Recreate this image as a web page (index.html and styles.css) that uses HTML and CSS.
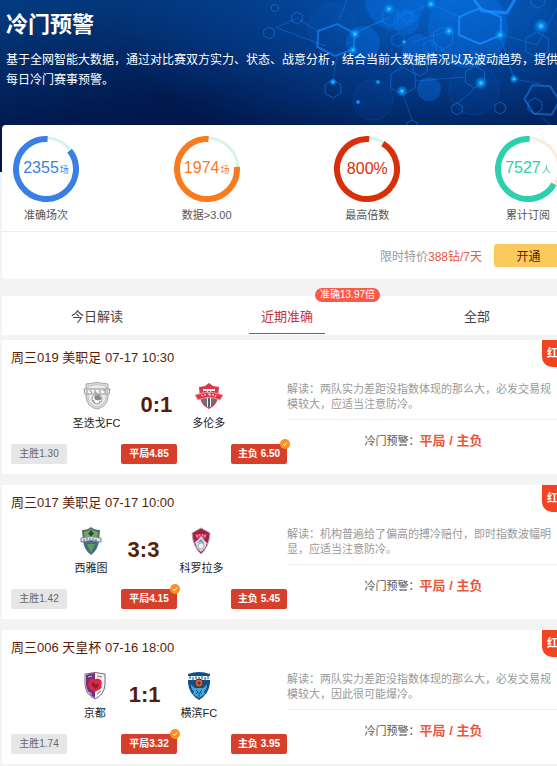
FILE: index.html
```html
<!DOCTYPE html>
<html lang="zh-CN">
<head>
  <meta charset="UTF-8" />
  <meta name="viewport" content="width=device-width, initial-scale=1" />
  <title>冷门预警</title>
  <link rel="stylesheet" href="styles.css">
</head>
<body>
  <header class="banner">
    <svg class="banner-bg" viewBox="0 0 574 172" preserveAspectRatio="xMaxYMin slice" aria-hidden="true">
      <defs>
        <path id="hex" d="M0-10 8.7-5V5L0 10-8.7 5V-5Z" vector-effect="non-scaling-stroke" />
        <radialGradient id="glow">
          <stop offset="0" stop-color="#5ce0ff" />
          <stop offset=".35" stop-color="#0aa0ff" stop-opacity=".8" />
          <stop offset="1" stop-color="#0080ff" stop-opacity="0" />
        </radialGradient>
      </defs>
      <g fill="#0a78f0" fill-opacity=".35">
        <circle cx="363" cy="43" r="17" />
        <circle cx="468" cy="28" r="40" />
        <circle cx="406" cy="22" r="13" />
        <circle cx="418" cy="50" r="16" />
        <circle cx="395" cy="0" r="30" />
        <circle cx="429" cy="89" r="12" />
      </g>
      <g fill="#0a60d0" fill-opacity=".1" stroke="#1a70d8" stroke-opacity=".2">
        <circle cx="332" cy="28" r="24" />
        <circle cx="373" cy="100" r="20" />
        <circle cx="474" cy="90" r="25" />
        <circle cx="530" cy="35" r="28" />
      </g>
      <g fill="none" stroke="#1f8cff" stroke-opacity=".35">
        <path d="M275 28 297 18 319 32M339 20 347 0M355 32 384 20M337 55 333 80M398 17 431 4 462 18M354 34 390 17M412 42 449 31M441 50 475 65M503 35 537 45 557 8M475 88 457 104M416 81 464 77M500 36 514 79 541 84M403 94 412 120M326 46 277 28M541 117 557 130" />
      </g>
      <g fill="none" stroke="#1a80f0" stroke-opacity=".55">
        <use href="#hex" transform="translate(403 81) scale(1.4)" />
        <use href="#hex" transform="translate(333 89) scale(.9)" />
        <use href="#hex" transform="translate(475 77) scale(1.1)" />
        <use href="#hex" transform="translate(537 45) scale(1.3)" />
        <use href="#hex" transform="translate(443 38) scale(1.1)" />
        <use href="#hex" transform="translate(390 17) scale(.9)" />
        <use href="#hex" transform="translate(407 17) scale(.6)" />
        <use href="#hex" transform="translate(297 18) scale(.6)" />
        <use href="#hex" transform="translate(269 33) scale(.6)" />
        <use href="#hex" transform="translate(275 8) scale(.4)" />
        <use href="#hex" transform="translate(457 109) scale(.6)" />
        <use href="#hex" transform="translate(500 108) scale(.6)" />
        <use href="#hex" transform="translate(535 106) scale(.8)" />
        <use href="#hex" transform="translate(430 47) scale(.7)" />
        <use href="#hex" transform="translate(398 40) scale(.7)" />
        <use href="#hex" transform="translate(420 68) scale(.8)" />
        <use href="#hex" transform="translate(538 0) scale(.8)" />
        <use href="#hex" transform="translate(412 126) scale(.6)" />
      </g>
      <g fill="none" stroke="#1a8cff" stroke-opacity=".8" stroke-width="2">
        <use href="#hex" transform="translate(336 40) rotate(4) scale(2.1 1.6)" stroke-opacity=".6" />
        <use href="#hex" transform="translate(480 26) scale(2.4 1.8)" />
        <use href="#hex" transform="translate(493 -8) rotate(30) scale(2.6 2.2)" stroke-width="3" />
        <use href="#hex" transform="translate(542 100) rotate(30) scale(1.8 1.6)" stroke-opacity=".5" />
      </g>
      <g fill="url(#glow)">
        <circle cx="389" cy="9" r="6" />
        <circle cx="431" cy="4" r="6" />
        <circle cx="449" cy="31" r="6" />
        <circle cx="355" cy="34" r="6" />
        <circle cx="353" cy="50" r="5" />
        <circle cx="500" cy="35" r="6" />
        <circle cx="541" cy="26" r="8" />
        <circle cx="333" cy="82" r="4" />
        <circle cx="402" cy="91" r="6" />
        <circle cx="481" cy="83" r="7" />
        <circle cx="514" cy="79" r="5" />
        <circle cx="358" cy="102" r="3" />
        <circle cx="378" cy="82" r="3" />
        <circle cx="404" cy="42" r="3" />
      </g>
    </svg>
    <div class="banner-text">
      <h1>冷门预警</h1>
      <p>基于全网智能大数据，通过对比赛双方实力、状态、战意分析，结合当前大数据情况以及波动趋势，提供每日冷门赛事预警。</p>
    </div>
  </header>

  <main>
    <section class="summary">
      <ul class="stats">
        <li class="stat blue">
          <div class="ring">
            <svg viewBox="0 0 66 66" aria-hidden="true">
              <circle class="track" cx="33" cy="33" r="31" />
              <circle class="arc" cx="33" cy="33" r="30" pathLength="360" stroke-dasharray="311 360" transform="rotate(-38 33 33)" />
            </svg>
            <strong>2355<small>场</small></strong>
          </div>
          <span class="label">准确场次</span>
        </li>
        <li class="stat orange">
          <div class="ring">
            <svg viewBox="0 0 66 66" aria-hidden="true">
              <circle class="track" cx="33" cy="33" r="31" />
              <circle class="arc" cx="33" cy="33" r="30" pathLength="360" stroke-dasharray="277 360" transform="rotate(-4 33 33)" />
            </svg>
            <strong>1974<small>场</small></strong>
          </div>
          <span class="label">数据&gt;3.00</span>
        </li>
        <li class="stat red">
          <div class="ring">
            <svg viewBox="0 0 66 66" aria-hidden="true">
              <circle class="track" cx="33" cy="33" r="31" />
              <circle class="arc" cx="33" cy="33" r="30" pathLength="360" stroke-dasharray="332 360" transform="rotate(-58 33 33)" />
            </svg>
            <strong>800%</strong>
          </div>
          <span class="label">最高倍数</span>
        </li>
        <li class="stat teal">
          <div class="ring">
            <svg viewBox="0 0 66 66" aria-hidden="true">
              <circle class="track" cx="33" cy="33" r="31" />
              <circle class="arc" cx="33" cy="33" r="30" pathLength="360" stroke-dasharray="243 360" transform="rotate(30 33 33)" />
            </svg>
            <strong>7527<small>人</small></strong>
          </div>
          <span class="label">累计订阅</span>
        </li>
      </ul>
      <div class="offer">
        <span>限时特价<em>388钻/7天</em></span>
        <button type="button" class="open-btn">开通</button>
      </div>
    </section>

    <nav class="tabs">
      <button type="button">今日解读</button>
      <button type="button" class="active">近期准确<span class="tip">准确13.97倍</span></button>
      <button type="button">全部</button>
    </nav>

    <article class="match">
      <h2>周三019 美职足 07-17 10:30</h2>
      <span class="ribbon">红</span>
      <div class="match-body">
        <div class="left">
          <div class="teams">
            <div class="team">
              <svg viewBox="0 0 28 28" aria-hidden="true">
                <path d="M3 2Q14-1 25 2V15Q24 25 14 27 4 25 3 15Z" fill="#dcdcdc" stroke="#a8a8a8" />
                <path d="M5 4Q14 1 23 4V15Q22 23 14 25 6 23 5 15Z" fill="#ececec" stroke="#c4c4c4" />
                <path d="M1 7H27L26 12H2Z" fill="#f5f5f5" stroke="#909090" />
                <path d="M4 8v3M7 8l2 3M12 8v3h2M17 8v3M20 8h2v3M24 8v3" stroke="#888" fill="none" />
                <circle cx="14" cy="17" r="5" fill="#fafafa" stroke="#999" />
                <path d="M12 14l4-1 2 4-3 1-3-1zM10 18l2 3M17 19l-1 2" fill="#888" stroke="#888" />
              </svg>
              <span>圣迭戈FC</span>
            </div>
            <b class="score">0:1</b>
            <div class="team">
              <svg viewBox="0 0 28 28" aria-hidden="true">
                <path d="M14 1 18 4 24 5 23 16Q21 24 14 27 7 24 5 16L4 5 10 4Z" fill="#d63a4e" />
                <path d="M7 16H21Q20 22 14 25 8 22 7 16Z" fill="#66727f" />
                <path d="M8 7H20V9H16V25H12V9H8Z" fill="#f2f2f4" />
                <path d="M13 9h2v16h-2z" fill="#536170" />
                <path d="M0 13Q14 8 28 13L25 18Q14 13 3 18Z" fill="#d9354b" stroke="#f0a0aa" />
                <path d="M6 13l2 1M10 12v2M13 12h2v2M18 12v2M21 13l-1 2" stroke="#fff" fill="none" />
              </svg>
              <span>多伦多</span>
            </div>
          </div>
          <div class="odds">
            <span>主胜1.30</span>
            <span class="hit">平局4.85</span>
            <span class="hit">主负 6.50<svg class="check" viewBox="0 0 10 10" aria-hidden="true"><circle cx="5" cy="5" r="5" /><path d="M3 5 4.500 6.500 7 3.500" /></svg></span>
          </div>
        </div>
        <div class="right">
          <p>解读：两队实力差距没指数体现的那么大，必发交易规模较大，应适当注意防冷。</p>
          <div class="warn">冷门预警：<b>平局 / 主负</b></div>
        </div>
      </div>
    </article>

    <article class="match">
      <h2>周三017 美职足 07-17 10:00</h2>
      <span class="ribbon">红</span>
      <div class="match-body">
        <div class="left">
          <div class="teams">
            <div class="team">
              <svg viewBox="0 0 28 28" aria-hidden="true">
                <path d="M5 3Q11 3 14 0 17 3 23 3L22 14Q21 23 14 28 7 23 6 14Z" fill="#50697c" />
                <path d="M7 5Q12 4 14 2 16 4 21 5L20 13H8Z" fill="#72ab4c" />
                <path d="M14 3l3 4-2 1v5h-2V8l-2-1z" fill="#24434e" />
                <path d="M8 16H20Q19 22 14 26 9 22 8 16Z" fill="#2c70a0" />
                <path d="M10 17h8l-4 9z" fill="#679b4f" />
                <path d="M4 11Q14 8 24 11V15Q14 12 4 15Z" fill="#dce3e6" stroke="#718895" />
                <path d="M7 12v2M10 11v2M13 11v2M16 11v2M19 12v2" stroke="#5b707e" />
              </svg>
              <span>西雅图</span>
            </div>
            <b class="score">3:3</b>
            <div class="team">
              <svg viewBox="0 0 28 28" aria-hidden="true">
                <path d="M14 1 23 6Q22 20 14 27 6 20 5 6Z" fill="#a51f45" stroke="#b8a2ac" />
                <path d="M8 7H20L18 12H10Z" fill="#cf4564" />
                <path d="M8 15 12 12 14 9 17 13 20 16 18 21 14 25 10 21Z" fill="#dbe2ee" />
                <path d="M10 16l4-4 4 5-4-2z" fill="#748fb6" />
                <circle cx="14" cy="19" r="3" fill="#f6f6fa" stroke="#9ea9c4" />
                <path d="M9 9h2M12 8h1M15 8h1M17 9h2" stroke="#f4c2cc" />
              </svg>
              <span>科罗拉多</span>
            </div>
          </div>
          <div class="odds">
            <span>主胜1.42</span>
            <span class="hit">平局4.15<svg class="check" viewBox="0 0 10 10" aria-hidden="true"><circle cx="5" cy="5" r="5" /><path d="M3 5 4.500 6.500 7 3.500" /></svg></span>
            <span class="hit">主负 5.45</span>
          </div>
        </div>
        <div class="right">
          <p>解读：机构普遍给了偏高的搏冷赔付，即时指数波幅明显，应适当注意防冷。</p>
          <div class="warn">冷门预警：<b>平局 / 主负</b></div>
        </div>
      </div>
    </article>

    <article class="match">
      <h2>周三006 天皇杯 07-16 18:00</h2>
      <span class="ribbon">红</span>
      <div class="match-body">
        <div class="left">
          <div class="teams">
            <div class="team">
              <svg viewBox="0 0 28 28" aria-hidden="true">
                <path d="M4 2Q14-1 24 2V13Q23 23 14 27 5 23 4 13Z" fill="#f4f0f4" stroke="#7c6680" />
                <path d="M5 3Q10 1 14 1V26Q6 22 5 13Z" fill="#71317f" />
                <path d="M16 4l5 1M17 18l4-3M16 22l4-3" stroke="#777" />
                <path d="M8 9Q10 5 13 8 16 5 20 8 22 12 19 17L14 20 9 17Q6 13 8 9Z" fill="#e1263f" />
                <path d="M10 12l3-2 1 3 3-2 1 3-4 3z" fill="#8f1f3b" />
                <path d="M7 5l4-1M7 20l4 2" stroke="#d9b7df" />
              </svg>
              <span>京都</span>
            </div>
            <b class="score">1:1</b>
            <div class="team">
              <svg viewBox="0 0 28 28" aria-hidden="true">
                <path d="M3 2Q14-2 25 2V11Q24 22 14 28 4 22 3 11Z" fill="#134f86" />
                <path d="M3 4H25V8H3Z" fill="#e9f3f8" />
                <path d="M5 4v3M8 5v3M11 4v3M14 5v3M17 4v3M20 5v3M23 4v3" stroke="#225a8a" />
                <circle cx="14" cy="11" r="4" fill="#d6653d" stroke="#542d35" />
                <path d="M12 11h4M14 9v4" stroke="#542d35" />
                <path d="M6 12Q6 18 9 19L8 22 14 26 20 22 19 19Q22 18 22 12 19 17 16 16H12Q9 17 6 12Z" fill="#43a8da" />
                <path d="M11 18l2 2-2 2M17 18l-2 2 2 2M14 20v5" stroke="#124a7d" fill="none" />
              </svg>
              <span>横滨FC</span>
            </div>
          </div>
          <div class="odds">
            <span>主胜1.74</span>
            <span class="hit">平局3.32<svg class="check" viewBox="0 0 10 10" aria-hidden="true"><circle cx="5" cy="5" r="5" /><path d="M3 5 4.500 6.500 7 3.500" /></svg></span>
            <span class="hit">主负 3.95</span>
          </div>
        </div>
        <div class="right">
          <p>解读：两队实力差距没指数体现的那么大，必发交易规模较大，因此很可能爆冷。</p>
          <div class="warn">冷门预警：<b>平局 / 主负</b></div>
        </div>
      </div>
    </article>
  </main>
</body>
</html>
```
FILE: styles.css
```css
* {
  box-sizing: border-box;
}

html {
  overflow-x: hidden;
  scrollbar-width: none;
}

body {
  margin: 0;
  min-width: 574px;
  background: #f3f3f3;
  font-family: "Liberation Sans", "Noto Sans CJK SC", sans-serif;
  font-size: 11px;
  color: #333;
}

h1, h2, p, ul {
  margin: 0;
  padding: 0;
}

button {
  border: 0;
  padding: 0;
  font-family: inherit;
  cursor: pointer;
}

/* banner */
.banner {
  position: relative;
  min-height: 172px;
  padding: 10px 6px 0;
  overflow: hidden;
  color: #fff;
  background:
    radial-gradient(ellipse 60% 100% at 78% 0, #0562c8 0%, rgba(4, 75, 165, 0.7) 45%, rgba(0, 30, 90, 0) 100%),
    linear-gradient(170deg, #033c82 0%, #01194e 48%, #000b33 100%);
}

.banner-bg {
  position: absolute;
  top: 0;
  left: 0;
  width: 100%;
  height: 100%;
}

.banner-text {
  position: relative;
}

.banner h1 {
  font-size: 22px;
  line-height: 30px;
  margin-bottom: 10px;
}

.banner p {
  font-size: 12px;
  line-height: 20px;
}

main {
  position: relative;
  margin: -47px 2px 0;
}

/* summary */
.summary {
  background: #fff;
  border-radius: 4px;
}

.stats {
  display: flex;
  justify-content: space-between;
  list-style: none;
  padding: 11px 0 8px;
  border-bottom: 1px solid #eee;
}

.stat {
  width: 88px;
  text-align: center;
}

.ring {
  display: grid;
  place-items: center;
  height: 66px;
  margin-bottom: 5px;
}

.ring svg,
.ring strong {
  grid-area: 1 / 1;
}

.ring svg {
  width: 66px;
  height: 66px;
  fill: none;
}

.ring strong {
  font-size: 16px;
  line-height: 20px;
  font-weight: normal;
}

.ring small {
  font-size: 9px;
  margin-left: 1px;
}

.track {
  stroke: #d5f5e8;
  stroke-width: 3px;
}

.arc {
  stroke: currentColor;
  stroke-width: 6px;
}

.blue { color: #3a7fe3; }
.orange { color: #fa7a20; }
.red { color: #d9300c; }
.teal { color: #2dd0ae; }

.teal .track {
  stroke: #fdebd7;
}

.label {
  display: block;
  line-height: 16px;
  color: #555;
}

.offer {
  display: flex;
  justify-content: flex-end;
  align-items: center;
  gap: 12px;
  height: 47px;
  padding-right: 9px;
  font-size: 12px;
  color: #999;
}

.offer em {
  font-style: normal;
  color: #e8573f;
}

.open-btn {
  width: 69px;
  height: 23px;
  border-radius: 3px;
  background: #fbca5e;
  color: #5a1a00;
  font-size: 12px;
}

/* tabs */
.tabs {
  display: flex;
  height: 39px;
  margin: 17px 0 5px;
  justify-content: space-around;
  background: #fff;
}

.tabs button {
  position: relative;
  width: 76px;
  background: none;
  font-size: 13px;
  color: #444;
}

.tabs .active {
  color: #c8323a;
  box-shadow: inset 0 -1px #b04848;
  height: 38px;
}

.tip {
  position: absolute;
  top: -8px;
  left: 66px;
  padding: 0 5px;
  border-radius: 7px;
  background: #fc5a46;
  color: #fff;
  font-size: 10px;
  line-height: 14px;
  white-space: nowrap;
}

/* match cards */
.match {
  position: relative;
  margin-bottom: 11px;
  padding-bottom: 10px;
  background: #fff;
}

.match h2 {
  padding-left: 9px;
  font-size: 13px;
  line-height: 36px;
  font-weight: normal;
  color: #5a1c08;
}

.ribbon {
  position: absolute;
  top: 0;
  right: 0;
  width: 30px;
  padding-left: 5px;
  border-radius: 0 0 10px 10px;
  background: #f24420;
  color: #fff;
  font-weight: bold;
  line-height: 27px;
}

.match-body {
  display: grid;
  grid-template-columns: 1fr 1fr;
}

.left {
  padding: 6px 0 0 9px;
}

.teams {
  display: flex;
  justify-content: center;
  gap: 20px;
}

.team {
  display: flex;
  flex-direction: column;
  align-items: center;
  gap: 5px;
  line-height: 16px;
  color: #222;
}

.team svg {
  width: 28px;
  height: 28px;
}

.score {
  font-size: 22px;
  line-height: 46px;
  color: #5a1c08;
}

.odds {
  display: flex;
  justify-content: space-between;
  margin-top: 13px;
}

.odds > span {
  position: relative;
  width: 56px;
  border-radius: 2px;
  background: #e6e6e6;
  color: #666;
  font-size: 10px;
  line-height: 20px;
  text-align: center;
}

.odds > .hit {
  background: #d6402b;
  color: #fff;
  font-weight: bold;
}

.check {
  position: absolute;
  top: -5px;
  right: -3px;
  width: 10px;
  height: 10px;
  fill: #fb921f;
}

.check path {
  fill: none;
  stroke: #fff;
}

.right {
  padding: 6px 12px 0 0;
}

.right p {
  padding-bottom: 7px;
  border-bottom: 1px solid #eee;
  line-height: 15px;
  color: #999;
}

.warn {
  line-height: 42px;
  text-align: center;
  color: #555;
}

.warn b {
  font-size: 13px;
  color: #e8573f;
}
```
